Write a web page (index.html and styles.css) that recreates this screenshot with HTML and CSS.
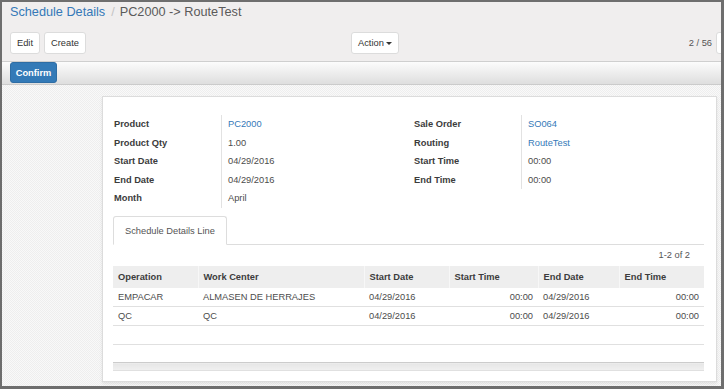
FILE: index.html
```html
<!DOCTYPE html>
<html>
<head>
<meta charset="utf-8">
<link rel="stylesheet" href="styles.css">
</head>
<body>
<div class="frame">
  <div class="cp">
    <div class="crumbs">
      <span class="crumb-link">Schedule Details</span><span class="crumb-sep">/</span><span class="crumb-cur">PC2000 -&gt; RouteTest</span>
    </div>
    <div class="cp-row">
      <div class="cp-left">
        <button class="btn">Edit</button>
        <button class="btn">Create</button>
      </div>
      <div class="cp-mid">
        <button class="btn btn-action">Action <span class="caret"></span></button>
      </div>
      <div class="cp-pager">
        <span class="pager-val">2 / 56</span>
        <button class="btn pager-btn"></button>
      </div>
    </div>
  </div>
  <div class="statusbar">
    <button class="btn-confirm">Confirm</button>
  </div>
  <div class="content">
    <div class="sheet">
      <div class="groups">
        <div class="group">
          <div class="lbl">Product</div><div class="val link">PC2000</div>
          <div class="lbl">Product Qty</div><div class="val">1.00</div>
          <div class="lbl">Start Date</div><div class="val">04/29/2016</div>
          <div class="lbl">End Date</div><div class="val">04/29/2016</div>
          <div class="lbl">Month</div><div class="val">April</div>
        </div>
        <div class="group">
          <div class="lbl">Sale Order</div><div class="val link">SO064</div>
          <div class="lbl">Routing</div><div class="val link">RouteTest</div>
          <div class="lbl">Start Time</div><div class="val">00:00</div>
          <div class="lbl">End Time</div><div class="val">00:00</div>
        </div>
      </div>
      <div class="tabs">
        <div class="tab">Schedule Details Line</div>
      </div>
      <div class="list-pager">1-2 of 2</div>
      <table class="lines">
        <colgroup>
          <col class="c1"><col class="c2"><col class="c3"><col class="c4"><col class="c5"><col class="c6">
        </colgroup>
        <thead>
          <tr><th>Operation</th><th>Work Center</th><th>Start Date</th><th>Start Time</th><th>End Date</th><th>End Time</th></tr>
        </thead>
        <tbody>
          <tr><td>EMPACAR</td><td>ALMASEN DE HERRAJES</td><td>04/29/2016</td><td class="num">00:00</td><td>04/29/2016</td><td class="num">00:00</td></tr>
          <tr><td>QC</td><td>QC</td><td>04/29/2016</td><td class="num">00:00</td><td>04/29/2016</td><td class="num">00:00</td></tr>
          <tr class="empty"><td></td><td></td><td></td><td></td><td></td><td></td></tr>
          <tr class="empty last"><td></td><td></td><td></td><td></td><td></td><td></td></tr>
        </tbody>
        <tfoot>
          <tr><td colspan="6"></td></tr>
        </tfoot>
      </table>
    </div>
  </div>
</div>
</body>
</html>
```

FILE: styles.css
```css
* { box-sizing: border-box; }
html, body { margin: 0; padding: 0; }
body {
  font-family: "Liberation Sans", Arial, sans-serif;
  font-size: 9.3px;
  color: #4c4c4c;
  background: #fff;
}
.frame {
  width: 724px;
  height: 389px;
  border-style: solid;
  border-color: #6e6e6e;
  border-width: 2px 3px 3px 2px;
  overflow: hidden;
  display: flex;
  flex-direction: column;
  background: #f0eeee;
}
.cp {
  background: #f0eeee;
  border-bottom: 1px solid #cfcfcf;
  padding: 2px 0 7px 0;
}
.crumbs {
  height: 17px;
  line-height: 17px;
  font-size: 12.7px;
  padding-left: 8px;
  white-space: nowrap;
}
.crumb-link { color: #3579b8; }
.crumb-sep { color: #c4c4c4; padding: 0 5px 0 6px; }
.crumb-cur { color: #5a5a5a; }
.cp-row {
  margin-top: 11px;
  margin-right: -40px;
  padding-left: 8px;
  display: grid;
  grid-template-columns: 341px 1fr auto;
  align-items: center;
  height: 22px;
}
.cp-left { display: flex; gap: 4px; }
.btn {
  font-family: inherit;
  font-size: 9.3px;
  color: #333;
  background: #fff;
  border: 1px solid #dcdcdc;
  border-radius: 3px;
  height: 22px;
  padding: 0 6px;
  margin: 0;
  line-height: 20px;
}
.btn-action { display: inline-flex; align-items: center; gap: 2px; }
.caret {
  display: inline-block;
  width: 0; height: 0;
  border-left: 3px solid transparent;
  border-right: 3px solid transparent;
  border-top: 3px solid #333;
  margin-top: 1px;
}
.cp-pager { display: flex; align-items: center; gap: 4px; }
.pager-val { color: #555; }
.pager-btn { width: 45px; }
.statusbar {
  height: 23px;
  background: linear-gradient(#fcfcfc, #dedede);
  border-bottom: 1px solid #cbcbcb;
  padding-left: 8px;
}
.btn-confirm {
  font-family: inherit;
  font-size: 9.3px;
  font-weight: bold;
  color: #fff;
  background: #337ab7;
  border: 1px solid #2e6da4;
  border-radius: 3px;
  height: 21px;
  width: 47px;
  padding: 0;
  margin: 0;
  display: block;
}
.content {
  flex: 1;
  background-color: #f4f4f4;
  background-image: repeating-conic-gradient(#eeeeee 0 25%, #f9f9f9 0 50%);
  background-size: 2px 2px;
  padding-top: 11px;
  padding-left: 100px;
}
.sheet {
  width: 615px;
  background: #fff;
  border: 1px solid #dcdcdc;
  box-shadow: 0 2px 3px rgba(0,0,0,0.08);
  padding: 18px 12px 10px 10px;
}
.groups {
  display: grid;
  grid-template-columns: 300px 1fr;
}
.group {
  display: grid;
  grid-template-columns: 109px 1fr;
  grid-auto-rows: 18.6px;
  align-content: start;
}
.lbl {
  font-weight: bold;
  color: #3c3c3c;
  padding-left: 1px;
  line-height: 18.6px;
  border-right: 1px solid #e2e2e2;
}
.val {
  padding-left: 6px;
  line-height: 18.6px;
  color: #4c4c4c;
}
.val.link { color: #3579b8; }
.tabs {
  margin-top: 8px;
  border-bottom: 1px solid #dddddd;
  height: 29px;
  display: flex;
}
.tab {
  height: 29px;
  padding: 0 11px;
  line-height: 28px;
  border: 1px solid #dddddd;
  border-bottom-color: #fff;
  border-radius: 3px 3px 0 0;
  background: #fff;
  color: #555;
  width: 114px;
  white-space: nowrap;
}
.list-pager {
  height: 21px;
  line-height: 21px;
  text-align: right;
  padding-right: 14px;
  color: #555;
}
.lines {
  width: 591px;
  border-collapse: collapse;
  table-layout: fixed;
}
.c1 { width: 85px; }
.c2 { width: 166px; }
.c3 { width: 85px; }
.c4 { width: 89px; }
.c5 { width: 81px; }
.c6 { width: 85px; }
.lines th {
  background: #eeeeee;
  height: 22px;
  text-align: left;
  font-weight: bold;
  color: #3c3c3c;
  padding: 0 5px;
  border-left: 1px solid #f7f7f7;
}
.lines th:first-child { border-left: none; }
.lines td {
  height: 19px;
  padding: 0 5px;
  border-bottom: 1px solid #e0e0e0;
  white-space: nowrap;
  overflow: hidden;
  color: #4c4c4c;
}
.lines td.num { text-align: right; }
.lines tr.last td { border-bottom: none; height: 18px; }
.lines tfoot td {
  height: 8px;
  padding: 0;
  border-top: 1px solid #cccccc;
  border-bottom: 1px solid #e0e0e0;
  background: linear-gradient(#e6e6e6, #f0f0f0);
}
```
